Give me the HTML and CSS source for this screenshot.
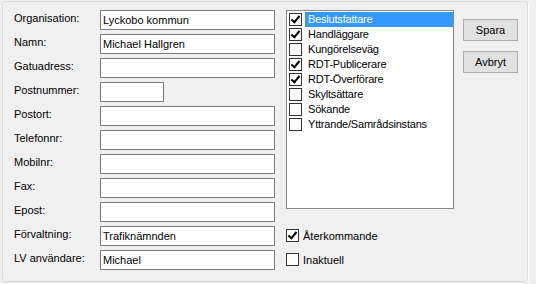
FILE: index.html
```html
<!DOCTYPE html>
<html lang="sv">
<head>
    <meta charset="UTF-8">
    <title>Användare</title>
    <link rel="stylesheet" href="styles.css">
</head>
<body>
    <div class="panel">
        <div class="form">
            <label>Organisation:</label>
            <div class="field">Lyckobo kommun</div>
            <label>Namn:</label>
            <div class="field">Michael Hallgren</div>
            <label>Gatuadress:</label>
            <div class="field"></div>
            <label>Postnummer:</label>
            <div class="field short"></div>
            <label>Postort:</label>
            <div class="field"></div>
            <label>Telefonnr:</label>
            <div class="field"></div>
            <label>Mobilnr:</label>
            <div class="field"></div>
            <label>Fax:</label>
            <div class="field"></div>
            <label>Epost:</label>
            <div class="field"></div>
            <label>Förvaltning:</label>
            <div class="field">Trafiknämnden</div>
            <label>LV användare:</label>
            <div class="field">Michael</div>
        </div>

        <div class="middle">
            <div class="listbox">
                <div class="item selected"><span class="check on"></span><span class="text">Beslutsfattare</span></div>
                <div class="item"><span class="check on"></span><span class="text">Handläggare</span></div>
                <div class="item"><span class="check"></span><span class="text">Kungörelseväg</span></div>
                <div class="item"><span class="check on"></span><span class="text">RDT-Publicerare</span></div>
                <div class="item"><span class="check on"></span><span class="text">RDT-Överförare</span></div>
                <div class="item"><span class="check"></span><span class="text">Skyltsättare</span></div>
                <div class="item"><span class="check"></span><span class="text">Sökande</span></div>
                <div class="item"><span class="check"></span><span class="text">Yttrande/Samrådsinstans</span></div>
            </div>
            <div class="flags">
                <div class="flag"><span class="check on"></span>Återkommande</div>
                <div class="flag"><span class="check"></span>Inaktuell</div>
            </div>
        </div>

        <div class="buttons">
            <button class="button">Spara</button>
            <button class="button">Avbryt</button>
        </div>
    </div>
</body>
</html>
```

FILE: styles.css
```css
body {
    margin: 0;
    background-color: #f0f0f0;
    font-family: "Liberation Sans", Arial, sans-serif;
    font-size: 11px;
    color: #000;
}
.panel {
    display: flex;
    box-sizing: border-box;
    width: 526px;
    height: 281px;
    margin: 1px 0 0 2px;
    padding: 8px 0 0 11px;
    border: 1px solid #dcdcdc;
    border-radius: 3px;
    box-shadow: 1px 1px 0 #fff;
}
.form {
    display: grid;
    grid-template-columns: 86px 175px;
    grid-auto-rows: 20px;
    row-gap: 4px;
}
.form label {
    line-height: 16px;
}
.field {
    box-sizing: border-box;
    height: 20px;
    padding-left: 2px;
    border: 1px solid #7a7a7a;
    background-color: #fff;
    line-height: 18px;
    white-space: nowrap;
}
.field.short {
    width: 64px;
}
.middle {
    display: flex;
    flex-direction: column;
    width: 168px;
    height: 260px;
    margin-left: 11px;
}
.listbox {
    box-sizing: border-box;
    height: 199px;
    padding-top: 1px;
    border: 1px solid #828790;
    background-color: #fff;
}
.item {
    display: flex;
    align-items: center;
    height: 15px;
    line-height: 15px;
}
.item .check {
    margin: 0 3px 0 2px;
}
.item .text {
    flex: 1;
    padding-left: 3px;
    letter-spacing: -0.2px;
}
.item.selected .text {
    background-color: #3399ff;
    color: #fff;
}
.check {
    position: relative;
    box-sizing: border-box;
    width: 13px;
    height: 13px;
    border: 1px solid #333;
    background-color: #fff;
    flex-shrink: 0;
}
.check.on::after {
    content: "";
    position: absolute;
    left: 3px;
    top: 0;
    width: 3px;
    height: 7px;
    border: solid #000;
    border-width: 0 2px 2px 0;
    transform: rotate(40deg);
}
.flags {
    display: flex;
    flex-direction: column;
    gap: 4px;
    margin-top: auto;
}
.flag {
    display: flex;
    align-items: center;
    gap: 4px;
    height: 20px;
    line-height: 16px;
}
.flag .check {
    margin-bottom: 2px;
}
.buttons {
    display: flex;
    flex-direction: column;
    gap: 10px;
    margin: 9px 0 0 9px;
}
.button {
    box-sizing: border-box;
    width: 55px;
    height: 22px;
    padding: 0;
    border: 1px solid #adadad;
    background-color: #e1e1e1;
    font-family: inherit;
    font-size: 11px;
    color: #000;
}
```
